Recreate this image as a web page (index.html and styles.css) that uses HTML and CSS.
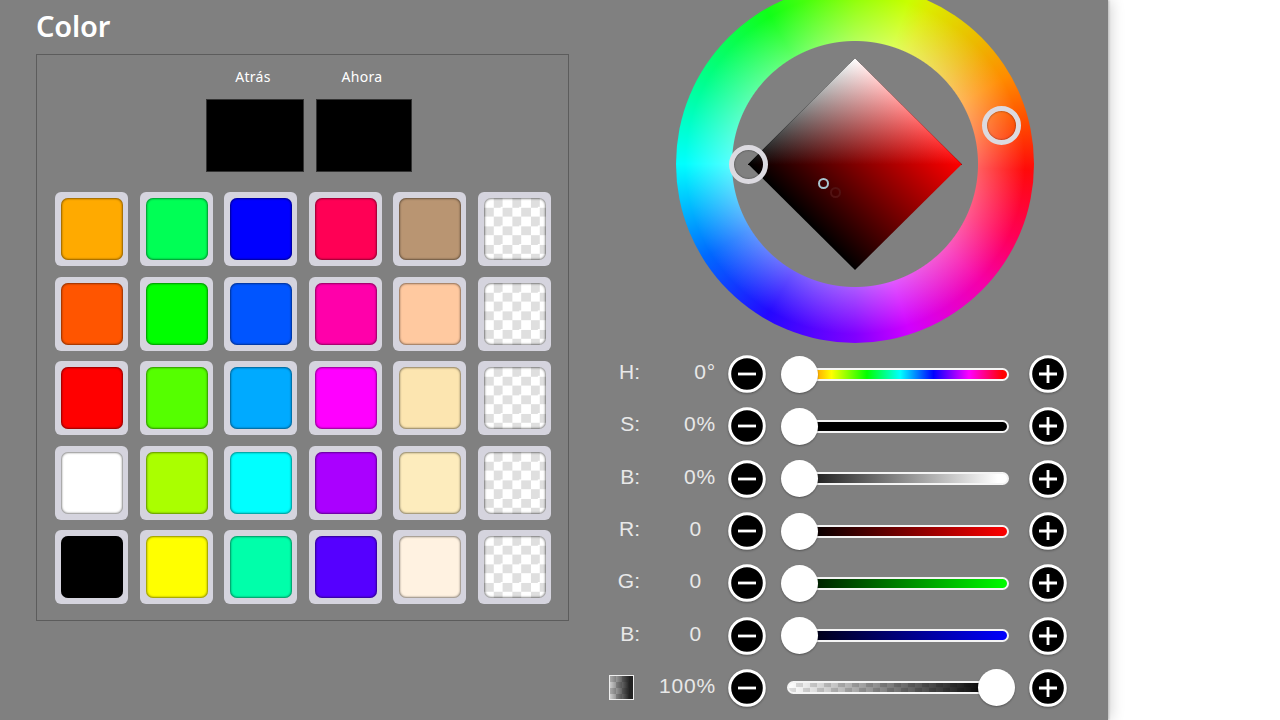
FILE: index.html
```
<!DOCTYPE html>
<html lang="es">
<head>
    <meta charset="UTF-8">
    <meta name="viewport" content="width=device-width, initial-scale=1.0">
    <title>Color</title>
    <link rel="stylesheet" href="styles.css">
</head>
<body>
    <div class="panel">
        <!-- Paleta -->
        <section class="palette">
            <h1>Color</h1>
            <div class="palette-box">
                <div class="compare">
                    <div class="compare-item">
                        <span class="compare-label">Atrás</span>
                        <div class="compare-color"></div>
                    </div>
                    <div class="compare-item">
                        <span class="compare-label">Ahora</span>
                        <div class="compare-color"></div>
                    </div>
                </div>
                <div class="swatches" id="swatches"></div>
            </div>
        </section>

        <!-- Rueda y deslizadores -->
        <section class="picker">
            <div class="wheel">
                <svg class="diamond" width="214" height="212" viewBox="0 0 214 212">
                    <defs>
                        <linearGradient id="redUpper" gradientUnits="userSpaceOnUse" x1="107" y1="0" x2="213.5" y2="107">
                            <stop offset="0" stop-color="#000"/>
                            <stop offset="1" stop-color="#f00"/>
                        </linearGradient>
                        <linearGradient id="redLower" gradientUnits="userSpaceOnUse" x1="107" y1="212" x2="213" y2="106">
                            <stop offset="0" stop-color="#000"/>
                            <stop offset="1" stop-color="#f00"/>
                        </linearGradient>
                        <linearGradient id="white" x1="0" y1="0" x2="0" y2="1">
                            <stop offset="0" stop-color="#fff"/>
                            <stop offset="1" stop-color="#000"/>
                        </linearGradient>
                    </defs>
                    <path d="M0 106H214L107 212Z" fill="url(#redLower)"/>
                    <path d="M107 0L214 106.5H0Z" fill="url(#redUpper)"/>
                    <path class="lighten" d="M107 0L214 106.5H0Z" fill="url(#white)"/>
                </svg>
                <span class="handle handle-hue"></span>
                <span class="handle handle-tone"></span>
                <span class="dot dot-light"></span>
                <span class="dot dot-dark"></span>
            </div>
            <div class="sliders" id="sliders"></div>
        </section>
    </div>

    <script src="script.js"></script>
</body>
</html>
```
FILE: styles.css
```
* {
    margin: 0;
    padding: 0;
    box-sizing: border-box;
}

body {
    width: 1280px;
    height: 720px;
    overflow: hidden;
    background: #fff;
    color: #fff;
    font-family: "Noto Sans", sans-serif;
}

.panel {
    display: flex;
    width: 1108px;
    height: 720px;
    background: #808080;
    box-shadow: 1px 0 2px #bbb, 2px 0 14px rgba(0, 0, 0, 0.2);
}

.palette {
    width: 608px;
    padding-left: 36px;
}

.palette h1 {
    height: 54px;
    font-size: 29px;
    font-weight: 600;
    line-height: 52px;
    letter-spacing: -0.2px;
}

.palette-box {
    width: 533px;
    height: 567px;
    border: 1px solid #5c5c5c;
}

.compare {
    display: flex;
    justify-content: center;
    gap: 12px;
    padding: 12px 0 0 13px;
}

.compare-item {
    width: 98px;
    text-align: center;
}

.compare-item + .compare-item {
    width: 96px;
}

.compare-label {
    display: block;
    height: 32px;
    padding-right: 4px;
    font-size: 14px;
    line-height: 20px;
    letter-spacing: 0.3px;
}

.compare-color {
    height: 73px;
    border: 1px solid #333;
    background: #000;
}

.swatches {
    display: grid;
    grid-template-columns: repeat(6, 73px);
    grid-auto-rows: 74px;
    gap: 10.6px 11.6px;
    padding: 20px 0 0 18px;
}

.swatch {
    padding: 6px 5px 6px 6px;
    border-radius: 6px;
    background: #d5d4de;
}

.swatch-color {
    height: 62px;
    border-radius: 7px;
    box-shadow: inset 0 0 2px 1px rgba(0, 0, 0, 0.45);
}

.swatch-empty {
    background: conic-gradient(#dfdfdf 25%, #fff 0 50%, #dfdfdf 0 75%, #fff 0) 0 0 / 18.6px 18.6px;
}

.picker {
    width: 500px;
}

/* wheel */
.wheel {
    position: relative;
    display: flex;
    align-items: center;
    justify-content: center;
    width: 358px;
    height: 358px;
    margin: -15px 0 0 68px;
    border-radius: 50%;
    background:
        radial-gradient(circle, #808080 122.5px, transparent 123.5px),
        radial-gradient(circle, rgba(255, 255, 255, 0.35) 123px, transparent 170px),
        conic-gradient(#8cff00, #c8ff00 18deg, #dcec00 25deg, #ecb900 45deg, #ff8c00 60deg, #ff4800 77deg, #ff0a0a 92deg, #ff0058 115deg, #f600a8 133deg, #e000dc 151deg, #d000ff 162deg, #8000ff 180deg, #2408ff 210deg, #0068ff 238deg, #0ff 270deg, #00ff90 298deg, #10ff18 330deg, #8cff00);
}

.diamond {
    isolation: isolate;
}

.lighten {
    mix-blend-mode: plus-lighter;
}

.handle {
    position: absolute;
    width: 39px;
    height: 39px;
    border: 5px solid #dcdae0;
    border-radius: 50%;
    box-shadow: inset 0 0 2px rgba(0, 0, 0, 0.6);
}

.handle-hue {
    left: 306px;
    top: 121px;
}

.handle-tone {
    left: 53px;
    top: 160px;
}

.dot {
    position: absolute;
    width: 11px;
    height: 11px;
    border: 2px solid #a9c6cf;
    border-radius: 50%;
}

.dot-light {
    left: 142px;
    top: 193px;
}

.dot-dark {
    left: 154px;
    top: 202px;
    border-color: #521212;
}

/* sliders */
.sliders {
    padding-top: 5px;
}

.row {
    display: grid;
    grid-template-columns: 32px 76px 12px 38px 3px 256px 4px 38px;
    align-items: center;
    height: 52.3px;
}

.label,
.value {
    color: #e8e8e8;
    font-family: "Liberation Sans", sans-serif;
    font-size: 21px;
    line-height: 24px;
    text-align: right;
    padding-bottom: 4px;
}

.value {
    letter-spacing: 0.8px;
}

.value-number {
    padding-right: 14px;
}

.step {
    display: block;
    width: 38px;
    height: 38px;
    filter: drop-shadow(0 1px 1px rgba(0, 0, 0, 0.35));
}

.minus {
    grid-column: 4;
}

.plus {
    grid-column: 8;
}

.slider {
    grid-column: 6;
    position: relative;
    padding-left: 18px;
}

.track {
    width: 222px;
    height: 13px;
    border: 2px solid #f4f4f4;
    border-radius: 7px;
    background-origin: border-box;
}

.knob {
    position: absolute;
    left: 12px;
    top: -12px;
    width: 37px;
    height: 37px;
    border-radius: 50%;
    background: #fff;
    box-shadow: 0 1px 2px rgba(0, 0, 0, 0.35);
}

.knob-end {
    left: 209px;
}

.track-hue {
    background-image: linear-gradient(to right, #f00, #ff0 20%, #0f0 36%, #0ff 51%, #00f 66%, #f0f 82%, #f00 97%);
}

.track-saturation {
    background: #000;
}

.track-brightness {
    background-image: linear-gradient(to right, #000, #fff 95%);
}

.track-red {
    background-image: linear-gradient(to right, #000 10%, #f00);
}

.track-green {
    background-image: linear-gradient(to right, #001a00 10%, #0f0);
}

.track-blue {
    background-image: linear-gradient(to right, #000010 10%, #00f);
}

.track-alpha {
    background:
        linear-gradient(to right, transparent, #000 92%),
        conic-gradient(#ddd 25%, #fff 0 50%, #ddd 0 75%, #fff 0) 0 0 / 14px 9px;
}

.alpha-icon {
    justify-self: start;
    width: 25px;
    height: 25px;
    margin: -1px 0 0 1px;
    border: 1px solid #eee;
    background:
        linear-gradient(to right, transparent, #222 85%),
        conic-gradient(#ccc 25%, #aaa 0 50%, #ccc 0 75%, #aaa 0) 0 0 / 12px 12px;
}
```
FILE: script.js
```
// Colores de la paleta, fila por fila (null = hueco vacío)
const palette = [
    '#ffaa00', '#00ff55', '#0000ff', '#ff0055', '#b99572', null,
    '#ff5500', '#00ff00', '#0055ff', '#ff00aa', '#ffc9a0', null,
    '#ff0000', '#55ff00', '#00aaff', '#ff00ff', '#fce5b0', null,
    '#ffffff', '#aaff00', '#00ffff', '#aa00ff', '#fdecbd', null,
    '#000000', '#ffff00', '#00ffaa', '#5500ff', '#fff2e1', null
];

const sliders = [
    { label: 'H:', value: '0°', track: 'hue' },
    { label: 'S:', value: '0%', track: 'saturation' },
    { label: 'B:', value: '0%', track: 'brightness' },
    { label: 'R:', value: '0', track: 'red' },
    { label: 'G:', value: '0', track: 'green' },
    { label: 'B:', value: '0', track: 'blue' },
    { label: '', value: '100%', track: 'alpha' }
];

const swatchBox = document.getElementById('swatches');
palette.forEach(color => {
    const swatch = document.createElement('div');
    const fill = document.createElement('div');
    swatch.className = 'swatch';
    fill.className = 'swatch-color';
    if (color) {
        fill.style.background = color;
    } else {
        fill.classList.add('swatch-empty');
    }
    swatch.appendChild(fill);
    swatchBox.appendChild(swatch);
});

function stepButton(type) {
    const sign = type === 'plus' ? 'M10 19H28M19 10V28' : 'M10 19H28';
    return `<svg class="step ${type}" viewBox="0 0 38 38">
        <circle cx="19" cy="19" r="17.3" fill="#000" stroke="#fff" stroke-width="3"/>
        <path d="${sign}" stroke="#fff" stroke-width="2.8"/>
    </svg>`;
}

document.getElementById('sliders').innerHTML = sliders.map(s => `
    <div class="row">
        ${s.label ? `<span class="label">${s.label}</span>` : '<span class="alpha-icon"></span>'}
        <span class="value ${s.value === '0' ? 'value-number' : ''}">${s.value}</span>
        ${stepButton('minus')}
        <div class="slider">
            <div class="track track-${s.track}"></div>
            <span class="knob ${s.track === 'alpha' ? 'knob-end' : ''}"></span>
        </div>
        ${stepButton('plus')}
    </div>`).join('');
```
